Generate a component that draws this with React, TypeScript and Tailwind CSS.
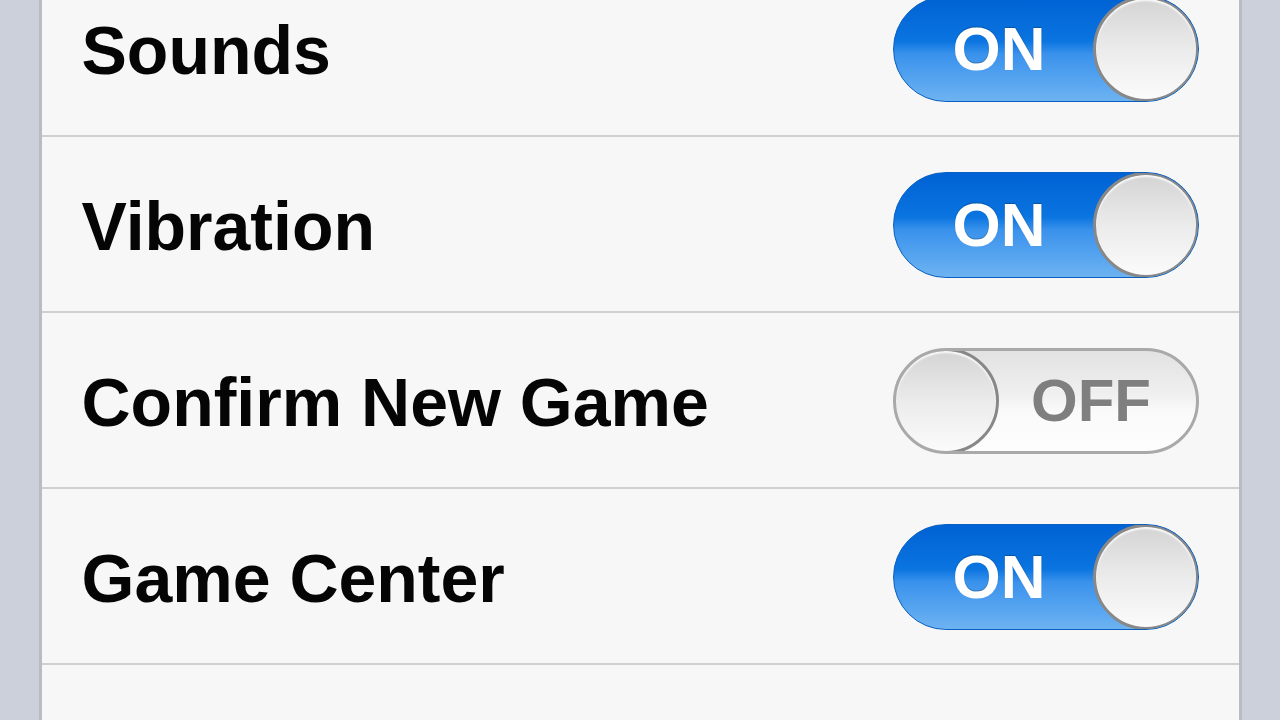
import React from "react";

type Setting = { label: string; on: boolean };

const SETTINGS: Setting[] = [
    { label: "Sounds", on: true },
    { label: "Vibration", on: true },
    { label: "Confirm New Game", on: false },
    { label: "Game Center", on: true },
    { label: "", on: false },
];

const Knob = () => (
    <div className="w-[106px] h-[106px] shrink-0 rounded-full border-[3px] border-[#888] bg-gradient-to-b from-[#d4d4d4] via-[#ebebeb] to-[#fbfbfb] shadow-[inset_0_2px_2px_rgba(255,255,255,0.9)]" />
);

const Toggle = ({ on }: { on: boolean }) => {
    if (on) {
        return (
            <div className="relative w-[306px] h-[106px] rounded-full overflow-hidden flex items-center border border-[#0a5fc0] bg-[linear-gradient(to_bottom,#0062d4_0%,#0a74e0_42%,#3a92ec_55%,#6db3f2_100%)]">
                <span className="flex-1 text-center pl-[12px] text-[62px] font-bold text-white leading-none [font-family:'Liberation_Sans',Arial,sans-serif] [text-shadow:0_-1px_1px_rgba(0,0,0,0.25)]">
                    ON
                </span>
                <div className="-mr-px">
                    <Knob />
                </div>
            </div>
        );
    }
    return (
        <div className="relative w-[306px] h-[106px] rounded-full overflow-hidden flex items-center border-[3px] border-[#a9a9a9] bg-[linear-gradient(to_bottom,#e2e2e2_0%,#f0f0f0_45%,#fafafa_60%,#fdfdfd_100%)]">
            <div className="-ml-[3px]">
                <Knob />
            </div>
            <span className="flex-1 text-center pr-[12px] text-[60px] font-bold text-[#7f7f7f] leading-none [font-family:'Liberation_Sans',Arial,sans-serif] [text-shadow:0_1px_0_rgba(255,255,255,0.9)]">
                OFF
            </span>
        </div>
    );
};

export default function App() {
    return (
        <div className="w-[1280px] h-[720px] overflow-hidden bg-[#cbd0da] flex justify-center">
            <div className="w-[1203px] h-[800px] bg-[#f7f7f7] border-x-[3px] border-[#b9bcc3] -mt-[39px] flex flex-col shrink-0">
                {SETTINGS.map((s, i) => (
                    <div
                        key={i}
                        className="h-[176px] shrink-0 border-b-[2px] border-[#cfcfcf] flex items-center justify-between pl-[40px] pr-[40px] pt-[2px]">
                        <span className="pt-[2px] text-[68px] font-bold text-[#050505] [font-family:'Liberation_Sans',Arial,sans-serif]">
                            {s.label}
                        </span>
                        {s.label && <Toggle on={s.on} />}
                    </div>
                ))}
            </div>
        </div>
    );
}
